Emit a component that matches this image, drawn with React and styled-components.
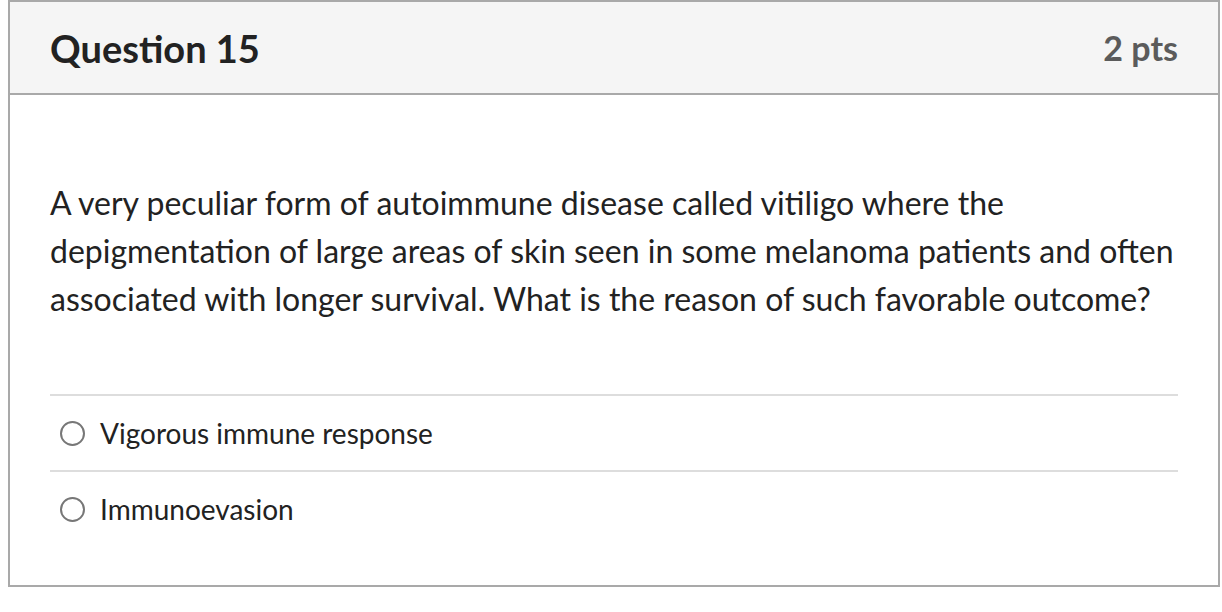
import styled, { createGlobalStyle } from "styled-components";

const GlobalStyle = createGlobalStyle`
  html, body {
    margin: 0;
    padding: 0;
    background: #ffffff;
  }
  body {
    font-family: Lato, "Open Sans", "Liberation Sans", sans-serif;
    color: #2d3b45;
  }
`;

const Page = styled.div`
  padding: 0 2px 0 8px;
`;

const Card = styled.div`
  border: 2px solid #a9a9a9;
  background: #ffffff;
`;

const Header = styled.div`
  display: flex;
  align-items: center;
  justify-content: space-between;
  height: 91px;
  padding: 0 40px;
  background: #f5f5f5;
  border-bottom: 2px solid #a9a9a9;
`;

const Title = styled.h2`
  margin: 0;
  font-size: 38px;
  font-weight: 700;
  color: #222222;
`;

const Points = styled.span`
  font-size: 34px;
  font-weight: 700;
  color: #5b5b5b;
`;

const Body = styled.div`
  padding: 84px 40px 39px;
`;

const QuestionText = styled.p`
  margin: 0;
  font-size: 32px;
  line-height: 48px;
  color: #222222;
`;

const Answers = styled.div`
  margin-top: 71px;
`;

const AnswerRow = styled.label`
  display: flex;
  align-items: center;
  height: 74px;
  border-top: 2px solid #dddddd;
  font-size: 28px;
  color: #222222;
`;

const Radio = styled.span`
  box-sizing: border-box;
  flex-shrink: 0;
  width: 25px;
  height: 25px;
  margin: 0 15px 0 10px;
  border: 2px solid #777777;
  border-radius: 50%;
  background: #ffffff;
`;

const answers = ["Vigorous immune response", "Immunoevasion"];

export default function App() {
  return (
    <Page>
      <GlobalStyle />
      <Card>
        <Header>
          <Title>Question 15</Title>
          <Points>2 pts</Points>
        </Header>
        <Body>
          <QuestionText>
            A very peculiar form of autoimmune disease called vitiligo where the
            depigmentation of large areas of skin seen in some melanoma patients and often
            associated with longer survival. What is the reason of such favorable outcome?
          </QuestionText>
          <Answers>
            {answers.map((a) => (
              <AnswerRow key={a}>
                <Radio />
                {a}
              </AnswerRow>
            ))}
          </Answers>
        </Body>
      </Card>
    </Page>
  );
}
